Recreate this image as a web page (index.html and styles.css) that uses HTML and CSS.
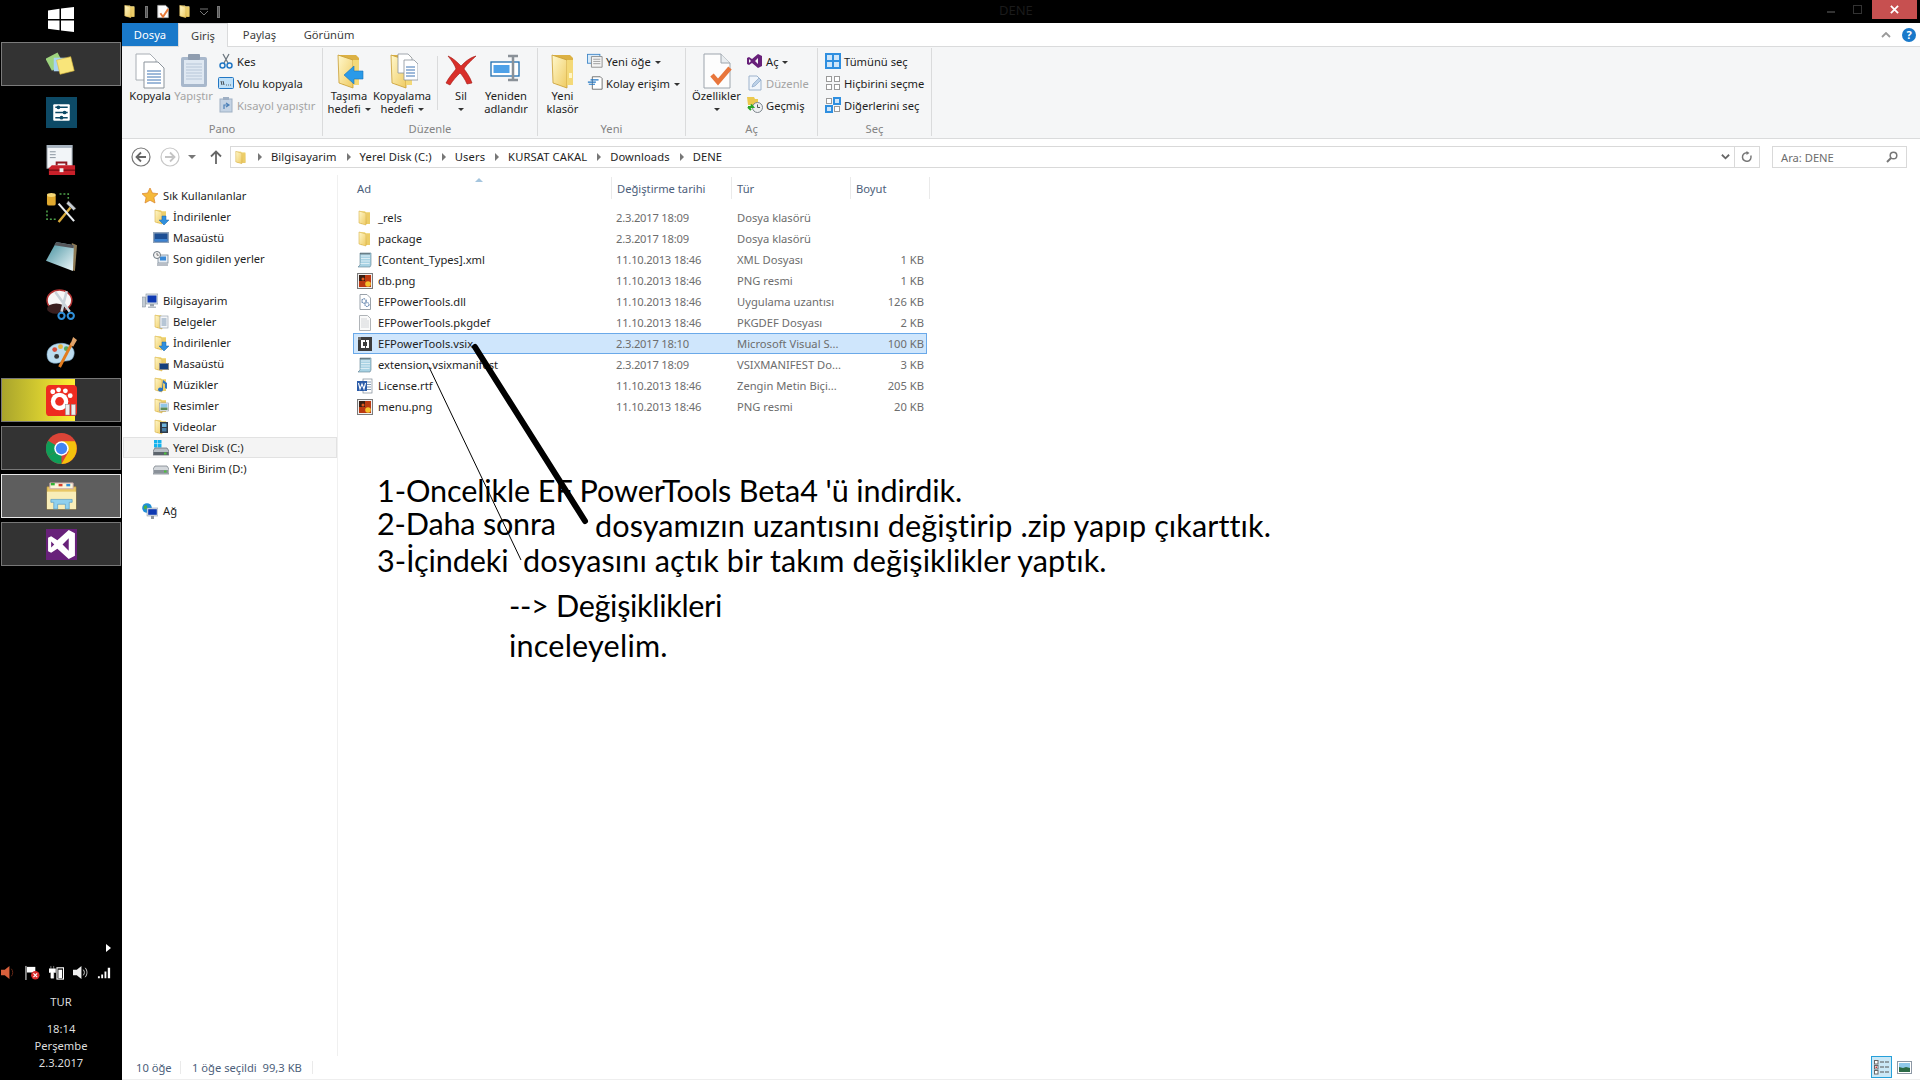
FILE: index.html
```html
<!DOCTYPE html>
<html lang="tr">
<head>
<meta charset="utf-8">
<title>DENE</title>
<link rel="stylesheet" href="styles.css">
</head>
<body>
<svg class="sprite" aria-hidden="true">
  <defs>
    <linearGradient id="gF" x1="0" y1="0" x2="1" y2="1"><stop offset="0" stop-color="#fff8cc"/><stop offset="1" stop-color="#efcb62"/></linearGradient>
    <linearGradient id="gB" x1="0" y1="0" x2="0" y2="1"><stop offset="0" stop-color="#f6e394"/><stop offset="1" stop-color="#d8ad42"/></linearGradient>
    <linearGradient id="gTeal" x1="0" y1="0" x2="1" y2="1"><stop offset="0" stop-color="#3f8d9c"/><stop offset="1" stop-color="#f2fafc"/></linearGradient>
  </defs>
  <symbol id="folder" viewBox="0 0 16 16"><path d="M2 1h6l.5 1H13v12H4z" fill="url(#gB)"/><path d="M2 1l7 2v12l-7-2z" fill="url(#gF)" stroke="#d9b34a" stroke-width=".6"/><rect x="9.500" y="3" width="3.500" height="11" fill="#eccd68"/></symbol>
  <symbol id="folderBig" viewBox="0 0 32 36"><path d="M5 2h18l3 3v27H10z" fill="#dcb144"/><path d="M5 2l15 5v28L6 30z" fill="url(#gF)" stroke="#c89d33" stroke-width=".8"/><path d="M20 7h6v25h-6z" fill="#f4d978"/><rect x="22" y="20" width="3" height="5" fill="#fff6c8"/></symbol>
  <symbol id="down" viewBox="0 0 16 16"><use href="#folder"/><path d="M9 7h4v4h3l-5 5-5-5h3z" fill="#2f8fdd" stroke="#1a66ad" stroke-width=".5"/></symbol>
  <symbol id="screen" viewBox="0 0 16 16"><rect x="0" y="2" width="16" height="11" fill="#8fa3bb"/><rect x="1.500" y="3.500" width="13" height="8" fill="#1d4f94"/><path d="M1.500 9h13v2.500h-13z" fill="#3c82d0"/></symbol>
  <symbol id="recent" viewBox="0 0 16 16"><rect x="5" y="4" width="10" height="8" fill="#e7edf4" stroke="#7c8b9a" stroke-width=".8"/><rect x="7" y="5.500" width="6" height="4" fill="#3a89d6"/><rect x="4" y="12" width="11" height="3" fill="#b8bec6"/><circle cx="4" cy="4" r="3.500" fill="#f4f4f4" stroke="#6c7780"/><path d="M4 2v2.200h1.800" stroke="#444" fill="none" stroke-width=".7"/></symbol>
  <symbol id="pc" viewBox="0 0 16 16"><rect x="0" y="4" width="3.500" height="10" fill="#c4ccd4" stroke="#7c8894" stroke-width=".5"/><rect x="4" y="1" width="12" height="10" fill="#dfe5ea" stroke="#7f8d9b" stroke-width=".6"/><rect x="5.500" y="2.500" width="9" height="7" fill="#0f3ab2"/><rect x="8" y="11" width="4" height="2.500" fill="#9aa4ad"/><rect x="6" y="13.500" width="8" height="1.500" fill="#b4bcc4"/></symbol>
  <symbol id="docs" viewBox="0 0 16 16"><use href="#folder"/><rect x="7" y="2" width="8" height="12" fill="#f4f6f8" stroke="#8d98a5" stroke-width=".6"/><path d="M8.500 5h5M8.500 7h5M8.500 9h5M8.500 11h5" stroke="#5c7da1" stroke-width=".8"/></symbol>
  <symbol id="desk" viewBox="0 0 16 16"><use href="#folder"/><rect x="6" y="7" width="10" height="7" fill="#888"/><rect x="7" y="8" width="8" height="5" fill="#163f7c"/></symbol>
  <symbol id="music" viewBox="0 0 16 16"><use href="#folder"/><path d="M10 3l4 3v6l-2-1V7l-2-1v6.500a2.500 2 0 1 1-1-1.500z" fill="#2c74c0"/></symbol>
  <symbol id="pics" viewBox="0 0 16 16"><use href="#folder"/><rect x="6.500" y="5" width="9" height="8" fill="#f4f6f8" stroke="#8d98a5" stroke-width=".6"/><rect x="7.500" y="6" width="7" height="3.500" fill="#8fc6e8"/><rect x="7.500" y="9.500" width="7" height="2.500" fill="#5d8c5a"/></symbol>
  <symbol id="vids" viewBox="0 0 16 16"><use href="#folder"/><rect x="7" y="3" width="8" height="11" fill="#2f3a46"/><rect x="9" y="4.500" width="4.500" height="3.500" fill="#6fb5dc"/><rect x="9" y="9" width="4.500" height="3.500" fill="#497fa6"/></symbol>
  <symbol id="diskc" viewBox="0 0 16 16"><path d="M1 0h3.500v3.500H1zM5 0h3.500v3.500H5zM1 4h3.500v3.500H1zM5 4h3.500v3.500H5z" fill="#15b3ee"/><path d="M2 8h12l2 3v4H0v-4z" fill="#b8bec4" stroke="#5e666e" stroke-width=".7"/><rect x="0.500" y="12" width="15" height="3" fill="#5c646c"/><rect x="11" y="12.500" width="2.500" height="2" fill="#4ec13f"/></symbol>
  <symbol id="diskd" viewBox="0 0 16 16"><path d="M2 5h12l2 3v5H0V8z" fill="#d4d8dc" stroke="#6e767e" stroke-width=".7"/><rect x="1" y="9" width="14" height="3.500" fill="#8a9199"/><rect x="11" y="9.500" width="2.500" height="2" fill="#4ec13f"/></symbol>
  <symbol id="net" viewBox="0 0 16 16"><circle cx="5" cy="5" r="4.800" fill="#1f8fd8"/><path d="M2 3c2-2 4 0 3 2S1 7 2 3z" fill="#48b148"/><rect x="5" y="5" width="11" height="8" fill="#dfe5ea" stroke="#7f8d9b" stroke-width=".5"/><rect x="6.200" y="6.200" width="8.600" height="5.600" fill="#0f3ab2"/><rect x="9" y="13" width="3" height="3" fill="#8d959d"/></symbol>
  <symbol id="xml" viewBox="0 0 16 16"><path d="M3 1h11v12l-1 2H1l2-2z" fill="#a9d3e4" stroke="#5f8092" stroke-width=".6"/><path d="M4 4h9M4 6.500h9M4 9h9M3.500 11.500h9" stroke="#e9f4f8" stroke-width=".8"/><path d="M4 1v1.500M6 1v1.500M8 1v1.500M10 1v1.500M12 1v1.500" stroke="#444"/></symbol>
  <symbol id="png" viewBox="0 0 16 16"><rect x=".5" y=".5" width="15" height="15" fill="#f0f0f0" stroke="#7a7a7a"/><rect x="2" y="2" width="12" height="12" fill="#bb3a12"/><path d="M2 2h6v6H2z" fill="#3a1f14"/><circle cx="11" cy="11" r="2.800" fill="#f5c22f"/><circle cx="6" cy="6" r="1.500" fill="#e45a1e"/></symbol>
  <symbol id="dll" viewBox="0 0 16 16"><path d="M3 .5h7l3.500 3.500v11.500H3z" fill="#fff" stroke="#9aa2aa"/><circle cx="7" cy="7" r="2.200" fill="none" stroke="#5d7fa8" stroke-width="1.200" stroke-dasharray="1.500 .7"/><circle cx="10" cy="10.500" r="2" fill="none" stroke="#6f8fb6" stroke-width="1.200" stroke-dasharray="1.500 .7"/></symbol>
  <symbol id="txt" viewBox="0 0 16 16"><path d="M2.500.5h8l3 3v12h-11z" fill="#fafafa" stroke="#b0b4b8"/><path d="M4 4h6M4 6h8M4 8h8M4 10h8M4 12h8" stroke="#c9cccf" stroke-width=".8"/></symbol>
  <symbol id="vsix" viewBox="0 0 16 16"><rect x="1" y="1" width="14" height="14" fill="#3d3d3d"/><path d="M4 4h4v2H6v4h2v2H4zM9 4h3v8H9v-2h1V6H9z" fill="#fff"/><rect x="0" y="0" width="4" height="4" fill="#fff" opacity=".25"/></symbol>
  <symbol id="rtf" viewBox="0 0 16 16"><rect x="6" y="1" width="9" height="14" fill="#fff" stroke="#7f8b96" stroke-width=".7"/><path d="M9 4h5M9 6.500h5M9 9h5M9 11.500h5" stroke="#5f7da0" stroke-width=".8"/><rect x="0" y="3" width="10" height="10" fill="#2a5ba8"/><path d="M1.500 5l1.500 6 2-5 2 5 1.500-6" fill="none" stroke="#fff" stroke-width="1.100"/></symbol>
  <symbol id="page" viewBox="0 0 30 36"><path d="M2 1h17l9 9v25H2z" fill="#fdfdfd" stroke="#9da5ad"/><path d="M19 1v9h9" fill="#e9edf0" stroke="#9da5ad"/></symbol>
</svg>

<aside class="taskbar">
  <div class="start">
    <svg class="win" viewBox="0 0 26 25"><path d="M0 3.500L11.500 1.800V12H0zM13 1.600L26 0V12H13zM0 13.500H11.500V23.300L0 21.800zM13 13.500H26V25L13 23.500z" fill="#fff"/></svg>
  </div>
  <div class="apps">
    <div class="app app-active">
      <svg class="appicon" viewBox="0 0 32 26"><rect x="2" y="3" width="14" height="14" fill="#9ed47e" transform="rotate(-28 9 10)"/><rect x="8" y="6" width="13" height="14" fill="#a8d3f2"/><rect x="12.500" y="6.500" width="15" height="15" fill="#f9e57a" stroke="#d9b93c" stroke-width=".6" transform="rotate(-14 20 14)"/></svg>
    </div>
    <div class="app">
      <svg class="appicon" viewBox="0 0 30 30"><rect width="30" height="30" fill="#0d4a66"/><rect x="7" y="7" width="16" height="16" rx="1" fill="#fff"/><path d="M9 10h12M9 15h12M9 20h12" stroke="#0d4a66" stroke-width="1.500"/><circle cx="12" cy="10" r="1.800" fill="#0d4a66"/><circle cx="18" cy="15" r="1.800" fill="#0d4a66"/><circle cx="15" cy="20" r="1.800" fill="#0d4a66"/></svg>
    </div>
    <div class="app">
      <svg class="appicon" viewBox="0 0 30 32"><rect x="0" y="0" width="26" height="24" fill="#f2f5f8" stroke="#8f99a3"/><rect x="0" y="0" width="26" height="3" fill="#a8b4c0"/><path d="M3 7h6M3 10h6M3 13h6" stroke="#88939e"/><path d="M5 21h24v10H2V24z" fill="#c9202a"/><path d="M2 26h27" stroke="#7e0f16" stroke-width="1.500"/><path d="M10 21v-3h10v3" fill="none" stroke="#8e1820" stroke-width="2"/><rect x="13" y="24" width="4" height="4" fill="#eee"/></svg>
    </div>
    <div class="app">
      <svg class="appicon" viewBox="0 0 32 32"><rect x="1" y="1" width="9" height="12" rx="2" fill="#e0a92f"/><ellipse cx="5.500" cy="2" rx="4.500" ry="2" fill="#f6d878"/><path d="M14 1h9v6M1 18v9h10" fill="none" stroke="#4ea14a" stroke-width="1.600" stroke-dasharray="2 2"/><path d="M13 30L27 13" stroke="#d9a93a" stroke-width="2.500"/><path d="M23 8l8 8-2.500 2-7.500-7z" fill="#c8ced4" stroke="#333" stroke-width=".5"/><path d="M13 11l16 18" stroke="#e8ecef" stroke-width="2.200"/></svg>
    </div>
    <div class="app">
      <svg class="appicon" viewBox="0 0 30 30"><path d="M25 2l5 2-2 25-3-1z" fill="#8d7a55"/><path d="M10 1l17 3-1 25L0 19z" fill="url(#gTeal)"/><path d="M10 1l17 3-.2 3L8 4z" fill="#55565a"/></svg>
    </div>
    <div class="app">
      <svg class="appicon" viewBox="0 0 30 30"><ellipse cx="13" cy="11" rx="12" ry="10" fill="#f7f7f7" stroke="#b03131" stroke-width="1.500"/><ellipse cx="10" cy="19" rx="9" ry="5" fill="#3a1f1f"/><path d="M9 3l14 19M20 2L15 22" stroke="#c9d2d9" stroke-width="2.500"/><circle cx="24" cy="26" r="3" fill="none" stroke="#2f8fd8" stroke-width="2"/><circle cx="15" cy="26" r="3" fill="none" stroke="#2f8fd8" stroke-width="2"/></svg>
    </div>
    <div class="app">
      <svg class="appicon" viewBox="0 0 32 32"><path d="M1 18C1 9 12 5 20 7c8 2 11 8 8 14-2 5-9 3-13 5-5 2-14 2-14-8z" fill="#bcdcef" stroke="#7aa9c6" stroke-width=".6"/><circle cx="9" cy="13" r="2.500" fill="#d8503c"/><circle cx="15" cy="10" r="2.500" fill="#e9b43a"/><circle cx="21" cy="12" r="2.500" fill="#5aa85a"/><circle cx="11" cy="20" r="2.500" fill="#333"/><path d="M14 31L27 6" stroke="#e27c1e" stroke-width="3"/><path d="M25 8l3-8 4 3-4 7z" fill="#e0a36a"/></svg>
    </div>
    <div class="app app-record">
      <svg class="appicon" viewBox="0 0 32 32"><rect width="32" height="32" rx="4" fill="#ee2c20"/><circle cx="14" cy="17" r="9" fill="#fff"/><circle cx="14" cy="17" r="4.500" fill="#ee2c20"/><circle cx="7" cy="7" r="2.500" fill="#fff"/><circle cx="13" cy="5" r="2.500" fill="#fff"/><circle cx="20" cy="6" r="2.500" fill="#fff"/><circle cx="25" cy="11" r="2.500" fill="#fff"/><rect x="20" y="20" width="4.500" height="11" fill="#eee" stroke="#888" stroke-width=".5"/><rect x="26" y="20" width="4.500" height="11" fill="#eee" stroke="#888" stroke-width=".5"/></svg>
    </div>
    <div class="app">
      <svg class="appicon" viewBox="0 0 30 30"><circle cx="15" cy="15" r="15" fill="#db4437"/><path d="M15 15L2 22.500A15 15 0 0 0 15 30z" fill="#0f9d58"/><path d="M15 15l-13 7.500A15 15 0 0 1 2 7.500z" fill="#0f9d58"/><path d="M15 8h13a15 15 0 0 1-13 22l7-12z" fill="#f4c20d"/><circle cx="15" cy="15" r="7" fill="#fff"/><circle cx="15" cy="15" r="5.500" fill="#4285f4"/></svg>
    </div>
    <div class="app app-open">
      <svg class="appicon" viewBox="0 0 32 30"><path d="M1 5h30v23H1z" fill="#e8c765" stroke="#b8943a" stroke-width=".6"/><path d="M4 1h24v6H4z" fill="#fbf6dc" stroke="#caa"/><rect x="5" y="1" width="4" height="2.500" fill="#33b233"/><rect x="13" y="2" width="4" height="2.500" fill="#d8402c"/><rect x="21" y="2" width="4" height="2.500" fill="#2f8fd8"/><path d="M1 10h30v18H1z" fill="#f8edb8"/><path d="M5 18h22v3h-3v7h-4v-5h-8v5H8v-7H5z" fill="#8fd0ee" stroke="#3f8fc2" stroke-width=".6"/></svg>
    </div>
    <div class="app">
      <svg class="appicon" viewBox="0 0 30 30"><rect width="30" height="30" fill="#68217a"/><path d="M22 1l6 3v22l-6 3-11-10-6 4-3-1.500v-13L5 7l6 4zM22 9l-6 6 6 6zM5 12v6l3-3z" fill="#fff" fill-rule="evenodd"/></svg>
    </div>
  </div>
  <div class="tray">
    <div class="tray-arrow"></div>
    <div class="tray-icons">
      <svg class="trayicon" viewBox="0 0 16 16"><path d="M0 5h4l5-4v14l-5-4H0z" fill="#d9603c"/><path d="M11 4c2 2 2 6 0 8" stroke="#6b2a16" fill="none"/></svg>
      <svg class="trayicon" viewBox="0 0 16 16"><path d="M1 1v15" stroke="#fff"/><path d="M2 2h9v6H2z" fill="#fff"/><circle cx="11" cy="11" r="4.500" fill="#d92b2b"/><path d="M9 9l4 4M13 9l-4 4" stroke="#fff" stroke-width="1.200"/></svg>
      <svg class="trayicon" viewBox="0 0 16 16"><path d="M2 1v3M5 1v3M0 4h7v4H5v6H2V8H0z" fill="#fff" stroke="#fff" stroke-width=".5"/><rect x="8.500" y="3" width="7" height="12" fill="none" stroke="#fff" stroke-width="1.200"/><rect x="10" y="5" width="4" height="9" fill="#fff"/></svg>
      <svg class="trayicon" viewBox="0 0 16 16"><path d="M0 5h4l5-4v14l-5-4H0z" fill="#eee"/><path d="M11 5c1.500 2 1.500 4 0 6M13 3c2.500 3 2.500 7 0 10" stroke="#ddd" fill="none"/></svg>
      <svg class="trayicon" viewBox="0 0 16 16"><path d="M1 12h2v2H1zM4.500 10h2v4h-2zM8 7h2v7H8zM11.500 3h2.500v11h-2.500z" fill="#fff"/></svg>
    </div>
    <div class="tray-lang">TUR</div>
    <div class="tray-clock"><span>18:14</span><span>Perşembe</span><span>2.3.2017</span></div>
  </div>
</aside>

<main class="window">
  <header class="titlebar">
    <div class="qat">
      <svg class="ico14" viewBox="0 0 16 16"><use href="#folder"/></svg>
      <i class="qat-sep"></i>
      <svg class="ico14" viewBox="0 0 16 16"><path d="M2 1h9l3 3v11H2z" fill="#fff" stroke="#aaa"/><path d="M5 10l3 4 6-9" stroke="#e87b3a" stroke-width="2.200" fill="none"/></svg>
      <svg class="ico14 qat-gap" viewBox="0 0 16 16"><use href="#folder"/></svg>
      <svg class="qat-menu" viewBox="0 0 8 8"><path d="M0 1h8" stroke="#777"/><path d="M0 3l4 4 4-4" fill="none" stroke="#777"/></svg>
      <i class="qat-sep"></i>
    </div>
    <div class="title">DENE</div>
    <div class="controls">
      <span class="ctl-min"></span>
      <span class="ctl-max"></span>
      <span class="ctl-close"><svg viewBox="0 0 10 10"><path d="M1 1l8 8M9 1L1 9" stroke="#fff" stroke-width="2"/></svg></span>
    </div>
  </header>

  <nav class="tabs">
    <span class="tab tab-file">Dosya</span>
    <span class="tab tab-on">Giriş</span>
    <span class="tab tab-share">Paylaş</span>
    <span class="tab tab-view">Görünüm</span>
    <div class="tabs-right">
      <svg class="collapse" viewBox="0 0 10 6"><path d="M1 5l4-4 4 4" fill="none" stroke="#9a9a9a" stroke-width="1.800"/></svg>
      <span class="help">?</span>
    </div>
  </nav>

  <section class="ribbon">
    <div class="group g-pano">
      <div class="gbody">
        <div class="big w-copy">
          <svg class="bigicon" viewBox="0 0 32 36"><path d="M2 1h14l6 6v20H2z" fill="#fff" stroke="#a8aeb4"/><path d="M10 9h14l6 6v20H10z" fill="#fff" stroke="#8b939b"/><path d="M13 18h14M13 21h14M13 24h14M13 27h14M13 30h14" stroke="#3f74b4"/></svg>
          <span class="lbl">Kopyala</span>
        </div>
        <div class="big w-paste dim">
          <svg class="bigicon" viewBox="0 0 28 36"><rect x="1" y="4" width="26" height="30" rx="2" fill="#a8b8cc"/><rect x="4" y="7" width="20" height="24" fill="#dfe8f2"/><path d="M6 11h16M6 14h16M6 17h16M6 20h16M6 23h16M6 26h16" stroke="#b7c6d8"/><rect x="8" y="1" width="12" height="6" rx="1" fill="#8f9daf"/></svg>
          <span class="lbl">Yapıştır</span>
        </div>
        <div class="smalls s-pano">
          <div class="small"><svg class="ico16" viewBox="0 0 16 16"><path d="M5 1l5 9M11 1L6 10" stroke="#6e7880" stroke-width="1.300"/><circle cx="4.500" cy="12.500" r="2.500" fill="none" stroke="#2277c4" stroke-width="1.500"/><circle cx="11.500" cy="12.500" r="2.500" fill="none" stroke="#2277c4" stroke-width="1.500"/></svg><span>Kes</span></div>
          <div class="small"><svg class="ico16" viewBox="0 0 16 16"><rect x=".5" y="2.500" width="15" height="11" rx="1" fill="#bfe0f8" stroke="#2277c4"/><path d="M3 6l1 4M5 6l1 4M8 10h.8M10 10h.8M12 10h.8" stroke="#222" stroke-width=".8"/></svg><span>Yolu kopyala</span></div>
          <div class="small dim"><svg class="ico16" viewBox="0 0 16 16"><rect x="2" y="2" width="12" height="13" fill="#c4d3e4" stroke="#9fb0c4"/><rect x="5" y="0" width="6" height="3" fill="#9fb0c4"/><path d="M6 12V8h4M8 6l3 2-3 2" stroke="#4c80b8" fill="none" stroke-width="1.200"/></svg><span>Kısayol yapıştır</span></div>
        </div>
      </div>
      <div class="glabel">Pano</div>
    </div>

    <div class="group g-edit">
      <div class="gbody">
        <div class="big w-move">
          <svg class="bigicon" viewBox="0 0 32 36"><use href="#folderBig"/><path d="M30 18h-9v-5L11 22l10 9v-5h9z" fill="#2a9ae8" stroke="#1a74b8" stroke-width=".6"/></svg>
          <span class="lbl">Taşıma<br>hedefi <i class="caret"></i></span>
        </div>
        <div class="big w-copyto">
          <svg class="bigicon" viewBox="0 0 32 36"><use href="#folderBig"/><path d="M12 1h10l4 4v15H12z" fill="#fff" stroke="#8b939b" stroke-width=".8"/><path d="M18 7h10l4 4v16H18z" fill="#fff" stroke="#8b939b" stroke-width=".8"/><path d="M20 14h9M20 17h9M20 20h9M20 23h9" stroke="#3f74b4"/></svg>
          <span class="lbl">Kopyalama<br>hedefi <i class="caret"></i></span>
        </div>
        <div class="vsep"></div>
        <div class="big w-del">
          <svg class="bigicon" viewBox="0 0 32 36"><path d="M3 3c5 2 9 6 13 10 4-4 8-8 15-10-5 5-10 9-12 13 3 4 6 8 8 14l-5 1c-2-5-5-9-7-11-3 3-7 7-10 12l-4-2c3-6 7-10 10-14C10 12 7 8 3 3z" fill="#d92f2a" stroke="#a11714" stroke-width=".6"/></svg>
          <span class="lbl">Sil<br><i class="caret"></i></span>
        </div>
        <div class="big w-ren">
          <svg class="bigicon" viewBox="0 0 32 36"><rect x="1" y="9" width="28" height="14" fill="#fff" stroke="#1f6eb0" stroke-width="1.300"/><rect x="3.500" y="12" width="16" height="8" fill="#4ea1e8"/><path d="M18 3h10M23 3v24M18 27h10" stroke="#8a9198" stroke-width="2.500"/></svg>
          <span class="lbl">Yeniden<br>adlandır</span>
        </div>
      </div>
      <div class="glabel">Düzenle</div>
    </div>

    <div class="group g-new">
      <div class="gbody">
        <div class="big w-newf">
          <svg class="bigicon" viewBox="0 0 32 36"><use href="#folderBig"/></svg>
          <span class="lbl">Yeni<br>klasör</span>
        </div>
        <div class="smalls s-new">
          <div class="small"><svg class="ico16" viewBox="0 0 18 16"><rect x=".5" y=".5" width="14" height="10" fill="#d8ebfa" stroke="#3f86c6"/><path d="M5 3h12v12H5z" fill="#f4f4f4" stroke="#888"/><path d="M7 6h8M7 8.500h8M7 11h8" stroke="#999"/></svg><span>Yeni öğe <i class="caret"></i></span></div>
          <div class="small"><svg class="ico16" viewBox="0 0 18 16"><path d="M6 1h9l2 2v12H6z" fill="#fff" stroke="#444" stroke-width=".8"/><path d="M1 7h9M4 4.500h9M2 9.500h7" stroke="#2277c4" stroke-width="1.200"/></svg><span>Kolay erişim <i class="caret"></i></span></div>
        </div>
      </div>
      <div class="glabel">Yeni</div>
    </div>

    <div class="group g-open">
      <div class="gbody">
        <div class="big w-prop">
          <svg class="bigicon" viewBox="0 0 30 36"><use href="#page"/><path d="M10 22l6 7 12-14" fill="none" stroke="#e8763c" stroke-width="4.500"/></svg>
          <span class="lbl">Özellikler<br><i class="caret"></i></span>
        </div>
        <div class="smalls s-open">
          <div class="small"><svg class="ico16" viewBox="0 0 16 16"><path d="M11 1l4 2v10l-4 2-6-5-3 2-2-1V5l2-1 3 2zM11 5L8 8l3 3zM2 6v4l2-2z" fill="#68217a" fill-rule="evenodd"/></svg><span>Aç <i class="caret"></i></span></div>
          <div class="small dim"><svg class="ico16" viewBox="0 0 16 16"><path d="M2 1h8l4 4v10H2z" fill="#f0f5fb" stroke="#9db3cc"/><path d="M5 12l1-3 6-6 2 2-6 6z" fill="#bcd1e8" stroke="#7f9cbf" stroke-width=".6"/></svg><span>Düzenle</span></div>
          <div class="small"><svg class="ico16" viewBox="0 0 16 16"><path d="M0 0h7l1 2h3v6H1z" fill="#ecc94e"/><circle cx="10.500" cy="10.500" r="5" fill="#eef0f2" stroke="#7d858c"/><path d="M10.500 7.500v3h2.500" stroke="#555" fill="none"/><path d="M1 10h5l-2-2.500M1 10l3 3" stroke="#2aa52a" stroke-width="2" fill="none"/></svg><span>Geçmiş</span></div>
        </div>
      </div>
      <div class="glabel">Aç</div>
    </div>

    <div class="group g-sel">
      <div class="gbody">
        <div class="smalls s-sel">
          <div class="small"><svg class="ico16" viewBox="0 0 16 16"><rect width="16" height="16" fill="#2f8fe0"/><rect x="2" y="2" width="5" height="5" fill="#cfe6fa"/><rect x="9" y="2" width="5" height="5" fill="#cfe6fa"/><rect x="2" y="9" width="5" height="5" fill="#cfe6fa"/><rect x="9" y="9" width="5" height="5" fill="#cfe6fa"/></svg><span>Tümünü seç</span></div>
          <div class="small"><svg class="ico16" viewBox="0 0 16 16"><g fill="#fff" stroke="#9a9a9a"><rect x="1.500" y="1.500" width="5" height="5"/><rect x="9.500" y="1.500" width="5" height="5"/><rect x="1.500" y="9.500" width="5" height="5"/><rect x="9.500" y="9.500" width="5" height="5"/></g></svg><span>Hiçbirini seçme</span></div>
          <div class="small"><svg class="ico16" viewBox="0 0 16 16"><g fill="#fff" stroke="#9a9a9a"><rect x="1.500" y="1.500" width="5" height="5"/><rect x="9.500" y="9.500" width="5" height="5"/></g><rect x="8" y="0" width="8" height="8" fill="#2f8fe0"/><rect x="0" y="8" width="8" height="8" fill="#2f8fe0"/><rect x="10" y="2" width="4" height="4" fill="#cfe6fa"/><rect x="2" y="10" width="4" height="4" fill="#cfe6fa"/></svg><span>Diğerlerini seç</span></div>
        </div>
      </div>
      <div class="glabel">Seç</div>
    </div>
  </section>

  <div class="addressrow">
    <div class="navbtns">
      <svg class="nav-round" viewBox="0 0 20 20"><circle cx="10" cy="10" r="9" fill="#fff" stroke="#777" stroke-width="1.200"/><path d="M15 10H6M10 5.500L5.500 10l4.500 4.500" fill="none" stroke="#666" stroke-width="1.800"/></svg>
      <svg class="nav-round" viewBox="0 0 20 20"><circle cx="10" cy="10" r="9" fill="#fff" stroke="#c8c8c8" stroke-width="1.200"/><path d="M5 10h9M10 5.500l4.500 4.500-4.500 4.500" fill="none" stroke="#c4c4c4" stroke-width="1.800"/></svg>
      <i class="caret caret-nav"></i>
      <svg class="nav-up" viewBox="0 0 12 14"><path d="M6 14V2M1 6.500L6 1.500l5 5" fill="none" stroke="#666" stroke-width="1.800"/></svg>
    </div>
    <div class="address">
      <svg class="ico14" viewBox="0 0 16 16"><use href="#folder"/></svg>
      <i class="crumb-arrow"></i><span>Bilgisayarim</span>
      <i class="crumb-arrow"></i><span>Yerel Disk (C:)</span>
      <i class="crumb-arrow"></i><span>Users</span>
      <i class="crumb-arrow"></i><span>KURSAT CAKAL</span>
      <i class="crumb-arrow"></i><span>Downloads</span>
      <i class="crumb-arrow"></i><span>DENE</span>
      <div class="address-end">
        <svg class="addr-drop" viewBox="0 0 10 8"><path d="M1 1.500l4 4 4-4" fill="none" stroke="#666" stroke-width="2"/></svg>
        <div class="addr-refresh"><svg viewBox="0 0 12 12"><path d="M9.800 4.500A4.300 4.300 0 1 1 6 1.700" fill="none" stroke="#777" stroke-width="1.500"/><path d="M5.500 0v4l3-2z" fill="#777"/></svg></div>
      </div>
    </div>
    <div class="search">
      <span>Ara: DENE</span>
      <svg class="search-ico" viewBox="0 0 12 12"><circle cx="7.500" cy="4.500" r="3.300" fill="none" stroke="#777" stroke-width="1.500"/><path d="M5 7l-4 4" stroke="#777" stroke-width="2"/></svg>
    </div>
  </div>

  <div class="content">
    <div class="tree">
      <div class="t0"><svg class="ico16" viewBox="0 0 16 16"><path d="M8 0l2.400 5 5.600.7-4.100 3.800 1.100 5.500L8 12.300 3 15l1.100-5.500L0 5.700 5.600 5z" fill="#f5b93a" stroke="#d9822b" stroke-width=".7"/></svg><span>Sık Kullanılanlar</span></div>
      <div class="t1"><svg class="ico16" viewBox="0 0 16 16"><use href="#down"/></svg><span>İndirilenler</span></div>
      <div class="t1"><svg class="ico16" viewBox="0 0 16 16"><use href="#screen"/></svg><span>Masaüstü</span></div>
      <div class="t1"><svg class="ico16" viewBox="0 0 16 16"><use href="#recent"/></svg><span>Son gidilen yerler</span></div>
      <div class="t0 tgap"><svg class="ico16" viewBox="0 0 16 16"><use href="#pc"/></svg><span>Bilgisayarim</span></div>
      <div class="t1"><svg class="ico16" viewBox="0 0 16 16"><use href="#docs"/></svg><span>Belgeler</span></div>
      <div class="t1"><svg class="ico16" viewBox="0 0 16 16"><use href="#down"/></svg><span>İndirilenler</span></div>
      <div class="t1"><svg class="ico16" viewBox="0 0 16 16"><use href="#desk"/></svg><span>Masaüstü</span></div>
      <div class="t1"><svg class="ico16" viewBox="0 0 16 16"><use href="#music"/></svg><span>Müzikler</span></div>
      <div class="t1"><svg class="ico16" viewBox="0 0 16 16"><use href="#pics"/></svg><span>Resimler</span></div>
      <div class="t1"><svg class="ico16" viewBox="0 0 16 16"><use href="#vids"/></svg><span>Videolar</span></div>
      <div class="t1 t-sel"><svg class="ico16" viewBox="0 0 16 16"><use href="#diskc"/></svg><span>Yerel Disk (C:)</span></div>
      <div class="t1"><svg class="ico16" viewBox="0 0 16 16"><use href="#diskd"/></svg><span>Yeni Birim (D:)</span></div>
      <div class="t0 tgap"><svg class="ico16" viewBox="0 0 16 16"><use href="#net"/></svg><span>Ağ</span></div>
    </div>

    <div class="files">
      <div class="fhead">
        <div class="hc hc-name">Ad<i class="sort"></i></div>
        <div class="hc">Değiştirme tarihi</div>
        <div class="hc">Tür</div>
        <div class="hc">Boyut</div>
      </div>
      <div class="frow"><div class="fname"><svg class="ico16" viewBox="0 0 16 16"><use href="#folder"/></svg>_rels</div><div class="fmeta">2.3.2017 18:09</div><div class="fmeta">Dosya klasörü</div><div class="fsize"></div></div>
      <div class="frow"><div class="fname"><svg class="ico16" viewBox="0 0 16 16"><use href="#folder"/></svg>package</div><div class="fmeta">2.3.2017 18:09</div><div class="fmeta">Dosya klasörü</div><div class="fsize"></div></div>
      <div class="frow"><div class="fname"><svg class="ico16" viewBox="0 0 16 16"><use href="#xml"/></svg>[Content_Types].xml</div><div class="fmeta">11.10.2013 18:46</div><div class="fmeta">XML Dosyası</div><div class="fsize">1 KB</div></div>
      <div class="frow"><div class="fname"><svg class="ico16" viewBox="0 0 16 16"><use href="#png"/></svg>db.png</div><div class="fmeta">11.10.2013 18:46</div><div class="fmeta">PNG resmi</div><div class="fsize">1 KB</div></div>
      <div class="frow"><div class="fname"><svg class="ico16" viewBox="0 0 16 16"><use href="#dll"/></svg>EFPowerTools.dll</div><div class="fmeta">11.10.2013 18:46</div><div class="fmeta">Uygulama uzantısı</div><div class="fsize">126 KB</div></div>
      <div class="frow"><div class="fname"><svg class="ico16" viewBox="0 0 16 16"><use href="#txt"/></svg>EFPowerTools.pkgdef</div><div class="fmeta">11.10.2013 18:46</div><div class="fmeta">PKGDEF Dosyası</div><div class="fsize">2 KB</div></div>
      <div class="frow frow-sel"><div class="fname"><svg class="ico16" viewBox="0 0 16 16"><use href="#vsix"/></svg>EFPowerTools.vsix</div><div class="fmeta">2.3.2017 18:10</div><div class="fmeta">Microsoft Visual S...</div><div class="fsize">100 KB</div></div>
      <div class="frow"><div class="fname"><svg class="ico16" viewBox="0 0 16 16"><use href="#xml"/></svg>extension.vsixmanifest</div><div class="fmeta">2.3.2017 18:09</div><div class="fmeta">VSIXMANIFEST Do...</div><div class="fsize">3 KB</div></div>
      <div class="frow"><div class="fname"><svg class="ico16" viewBox="0 0 16 16"><use href="#rtf"/></svg>License.rtf</div><div class="fmeta">11.10.2013 18:46</div><div class="fmeta">Zengin Metin Biçi...</div><div class="fsize">205 KB</div></div>
      <div class="frow"><div class="fname"><svg class="ico16" viewBox="0 0 16 16"><use href="#png"/></svg>menu.png</div><div class="fmeta">11.10.2013 18:46</div><div class="fmeta">PNG resmi</div><div class="fsize">20 KB</div></div>
    </div>
  </div>

  <footer class="status">
    <span class="st-count">10 öğe</span>
    <span class="st-sel">1 öğe seçildi&nbsp; 99,3 KB</span>
    <div class="st-views">
      <span class="view-on"><svg viewBox="0 0 16 16"><g fill="#fff" stroke="#666"><rect x=".5" y="1.500" width="3.500" height="3.500"/><rect x=".5" y="6.500" width="3.500" height="3.500"/><rect x=".5" y="11.500" width="3.500" height="3.500"/></g><rect x="1.500" y="7.500" width="1.500" height="1.500" fill="#c33"/><path d="M6 3h4M11 3h4M6 8h4M11 8h4M6 13h4M11 13h4" stroke="#555"/></svg></span>
      <svg class="view-off" viewBox="0 0 15 13"><rect x=".5" y=".5" width="14" height="12" fill="#fff" stroke="#8d98a5"/><rect x="2" y="2" width="11" height="9" fill="#8fc9ea"/><path d="M2 6l4 1 3-1 4 1v4H2z" fill="#2c6b46"/></svg>
    </div>
  </footer>
</main>

<svg class="marks" viewBox="0 0 1920 1080" aria-hidden="true">
  <path d="M475 347L585 521" stroke="#000" stroke-width="6" stroke-linecap="round"/>
  <path d="M429 367L521 560" stroke="#000" stroke-width="1"/>
</svg>
<div class="note n1">1-Oncelikle EF PowerTools Beta4 'ü indirdik.</div>
<div class="note n2">2-Daha sonra</div>
<div class="note n2b">dosyamızın uzantısını değiştirip .zip yapıp çıkarttık.</div>
<div class="note n3">3-İçindeki</div>
<div class="note n3b">dosyasını açtık bir takım değişiklikler yaptık.</div>
<div class="note n4">--&gt; Değişiklikleri</div>
<div class="note n5">inceleyelim.</div>
</body>
</html>
```
FILE: styles.css
```css
* { box-sizing: border-box; }
html, body { margin: 0; height: 100%; }
body {
  width: 1920px; height: 1080px; overflow: hidden; display: flex; position: relative;
  background: #fff; color: #1e1e1e;
  font: 11.2px/13px "Noto Sans", "Open Sans", sans-serif;
}
.sprite { position: absolute; width: 0; height: 0; }
i { font-style: normal; display: inline-block; }

/* taskbar */
.taskbar { width: 122px; flex: none; background: #000; color: #eee; display: flex; flex-direction: column; }
.start { height: 42px; display: flex; align-items: center; justify-content: center; padding-bottom: 4px; }
.win { width: 26px; height: 25px; }
.apps { display: flex; flex-direction: column; gap: 4px; }
.app { height: 44px; margin: 0 1px; width: 120px; display: flex; align-items: center; justify-content: center; border: 1px solid transparent; }
.appicon { width: 31px; height: 31px; }
.app-active { background: #333; border-color: #7b7b7b; }
.app-record { border: 1px solid #777; background: linear-gradient(90deg, #a8a42c 0, #fff033 73px, #333 73px); }
.app-open { background: #5e5e5e; border-color: #e8e8e8; }
.apps .app:nth-child(9), .apps .app:nth-child(11) { background: #333; border-color: #777; }
.tray { margin-top: auto; height: 136px; display: flex; flex-direction: column; align-items: center; }
.tray-arrow { width: 0; height: 0; align-self: flex-end; margin: 0 11px 0 0; border-left: 5px solid #fff; border-top: 4px solid transparent; border-bottom: 4px solid transparent; }
.tray-icons { display: flex; gap: 9px; margin-top: 13px; align-self: flex-start; padding-left: 1px; }
.trayicon { width: 15px; height: 15px; }
.tray-lang { margin-top: 15px; color: #ddd; }
.tray-clock { margin-top: 12px; display: flex; flex-direction: column; align-items: center; line-height: 17px; color: #ddd; }

/* window */
.window { width: 1798px; flex: none; display: flex; flex-direction: column; height: 1080px; }
.titlebar { height: 23px; flex: none; background: #000; display: flex; align-items: flex-start; position: relative; }
.qat { display: flex; align-items: center; gap: 6px; padding: 4px 0 0 1px; }
.ico14 { width: 14px; height: 15px; flex: none; }
.qat-sep { width: 3px; height: 12px; background: #555; margin: 0 2px; border: 1px solid #777; }
.qat-gap { margin-left: 2px; }
.qat-menu { width: 8px; height: 8px; margin: 0 1px 0 2px; }
.title { position: absolute; left: 877px; top: 4px; color: #1b1b1b; font-size: 13px; }
.controls { margin-left: auto; display: flex; align-items: flex-start; }
.ctl-min { width: 8px; height: 2px; background: #333; margin: 11px 18px 0 0; }
.ctl-max { width: 9px; height: 9px; border: 1px solid #333; margin: 5px 10px 0 0; }
.ctl-close { width: 45px; height: 19px; background: #c75050; margin-right: 3px; display: flex; align-items: center; justify-content: center; }
.ctl-close svg { width: 9px; height: 9px; }

.tabs { height: 24px; flex: none; display: flex; align-items: stretch; background: #fff; border-bottom: 1px solid #dadbdc; position: relative; }
.tab { display: flex; align-items: center; justify-content: center; color: #3c3c3c; }
.tab-file { width: 56px; background: #1979ca; color: #fff; }
.tab-on { width: 50px; background: #f5f6f7; border: 1px solid #dadbdc; border-bottom: none; margin-bottom: -1px; }
.tab-share { margin-left: 11px; width: 41px; }
.tab-view { margin-left: 23px; width: 52px; }
.tabs-right { margin-left: auto; display: flex; align-items: center; gap: 11px; padding-right: 4px; }
.collapse { width: 10px; height: 6px; }
.help { width: 14px; height: 14px; border-radius: 50%; background: #1979ca; color: #fff; font-weight: 700; font-size: 11px; line-height: 14px; text-align: center; }

.ribbon { height: 92px; flex: none; background: #f5f6f7; border-bottom: 1px solid #dadbdc; display: flex; }
.group { display: flex; flex-direction: column; margin-top: 1px; height: 88px; border-right: 1px solid #dadbdc; }
.g-pano { width: 201px; } .g-edit { width: 215px; } .g-new { width: 148px; } .g-open { width: 132px; } .g-sel { width: 114px; }
.gbody { height: 74px; display: flex; align-items: flex-start; }
.glabel { text-align: center; color: #848484; line-height: 14px; }
.big { display: flex; flex-direction: column; align-items: center; padding-top: 5px; text-align: center; flex: none; }
.bigicon { width: 32px; height: 36px; flex: none; }
.lbl { white-space: nowrap; }
.w-copy { width: 56px; } .w-paste { width: 31px; } .w-move { width: 52px; } .w-copyto { width: 54px; } .w-del { width: 30px; } .w-ren { width: 60px; } .w-newf { width: 49px; } .w-prop { width: 61px; }
.dim { color: #a4a4a4; }
.vsep { width: 1px; height: 54px; background: #dadbdc; margin: 8px 8px 0; flex: none; }
.caret { width: 0; height: 0; border-left: 3px solid transparent; border-right: 3px solid transparent; border-top: 3px solid #333; vertical-align: 2px; margin-left: 1px; }
.smalls { display: flex; flex-direction: column; padding-top: 2px; flex: none; }
.small { height: 22px; display: flex; align-items: center; gap: 3px; white-space: nowrap; }
.ico16 { width: 16px; height: 16px; flex: none; }
.s-pano { margin-left: 9px; } .s-sel { margin-left: 7px; }

.addressrow { height: 36px; flex: none; display: flex; align-items: flex-start; padding-top: 7px; }
.navbtns { width: 108px; height: 22px; flex: none; display: flex; align-items: center; padding-left: 9px; gap: 9px; }
.nav-round { width: 20px; height: 20px; }
.caret-nav { border-top-color: #777; border-left-width: 4px; border-right-width: 4px; border-top-width: 4px; margin: 0 3px 0 -1px; vertical-align: 0; }
.nav-up { width: 12px; height: 14px; margin-left: 2px; }
.address { width: 1530px; height: 22px; flex: none; border: 1px solid #d9d9d9; display: flex; align-items: center; padding: 0 0 0 3px; color: #1e1e1e; letter-spacing: .1px; }
.address span { padding-bottom: 1px; }
.crumb-arrow { width: 0; height: 0; border-left: 4px solid #777; border-top: 4px solid transparent; border-bottom: 4px solid transparent; margin: 0 9px 0 10px; }
.address-end { margin-left: auto; display: flex; align-items: stretch; height: 100%; }
.addr-drop { width: 9px; height: 8px; align-self: center; margin-right: 4px; }
.addr-refresh { width: 25px; border-left: 1px solid #d9d9d9; display: flex; align-items: center; justify-content: center; }
.addr-refresh svg { width: 12px; height: 12px; }
.search { width: 135px; height: 22px; margin-left: 12px; flex: none; border: 1px solid #d9d9d9; display: flex; align-items: center; justify-content: space-between; padding: 0 8px; color: #6d6d6d; }
.search-ico { width: 12px; height: 12px; }

.content { flex: 1; display: flex; min-height: 0; }
.tree { width: 216px; flex: none; border-right: 1px solid #f0f0f0; padding-top: 10px; }
.t0, .t1 { height: 21px; display: flex; align-items: center; gap: 4px; white-space: nowrap; }
.t0 { padding-left: 20px; gap: 5px; }
.t1 { padding-left: 30px; gap: 4px; border: 1px solid transparent; }
.t-sel { background: #f4f4f4; border-color: #e2e2e2; margin-left: 1px; padding-left: 29px; }
.tgap { margin-top: 21px; }
.files { padding-left: 15px; width: 593px; flex: none; }
.fhead { height: 32px; display: grid; grid-template-columns: 259px 120px 119px 79px; color: #4c607a; }
.hc { height: 22px; padding-left: 5px; border-right: 1px solid #eaeaea; display: flex; align-items: center; position: relative; margin-top: 2px; }
.hc-name { padding-left: 4px; }
.sort { position: absolute; left: 122px; top: 1px; width: 0; height: 0; border-left: 4px solid transparent; border-right: 4px solid transparent; border-bottom: 4px solid #a5c5de; }
.frow { width: 574px; height: 21px; display: grid; grid-template-columns: 258px 120px 119px 75px; align-items: center; border: 1px solid transparent; }
.frow-sel { background: #cfe6fc; border-color: #6aa9e9; }
.fname { display: flex; align-items: center; gap: 5px; padding-left: 3px; white-space: nowrap; }
.fmeta { color: #6d6d6d; padding-left: 4px; white-space: nowrap; }
.frow .fmeta:nth-child(2) { letter-spacing: -.22px; }
.frow .fmeta:nth-child(3) { padding-left: 5px; }
.fsize { color: #6d6d6d; text-align: right; padding-right: 2px; }

.status { height: 24px; flex: none; display: flex; align-items: center; border-bottom: 1px solid #eee; color: #4c607a; padding-bottom: 1px; }
.st-count { width: 45px; margin-left: 14px; border-right: 1px solid #eaeaea; }
.st-sel { margin-left: 11px; padding-right: 10px; border-right: 1px solid #eaeaea; }
.st-views { margin-left: auto; display: flex; align-items: center; gap: 5px; padding-right: 8px; }
.view-on { width: 21px; height: 22px; background: #cbe8f6; border: 1px solid #26a0da; display: flex; align-items: center; justify-content: center; }
.view-on svg { width: 16px; height: 16px; }
.view-off { width: 15px; height: 13px; }

/* hand-drawn annotation on top of the screenshot */
.marks { position: absolute; left: 0; top: 0; width: 1920px; height: 1080px; pointer-events: none; }
.note { position: absolute; font: 30.6px/34px Lato, "Open Sans", sans-serif; color: #000; white-space: nowrap; }
.n1 { left: 377px; top: 474px; letter-spacing: -.11px; }
.n2 { left: 377px; top: 507px; letter-spacing: -.2px; }
.n2b { left: 595px; top: 509px; letter-spacing: .09px; }
.n3 { left: 377px; top: 544px; letter-spacing: -.1px; }
.n3b { left: 523px; top: 544px; letter-spacing: .08px; }
.n4 { left: 509px; top: 589px; letter-spacing: -.33px; }
.n5 { left: 509px; top: 629px; letter-spacing: .2px; }
```
